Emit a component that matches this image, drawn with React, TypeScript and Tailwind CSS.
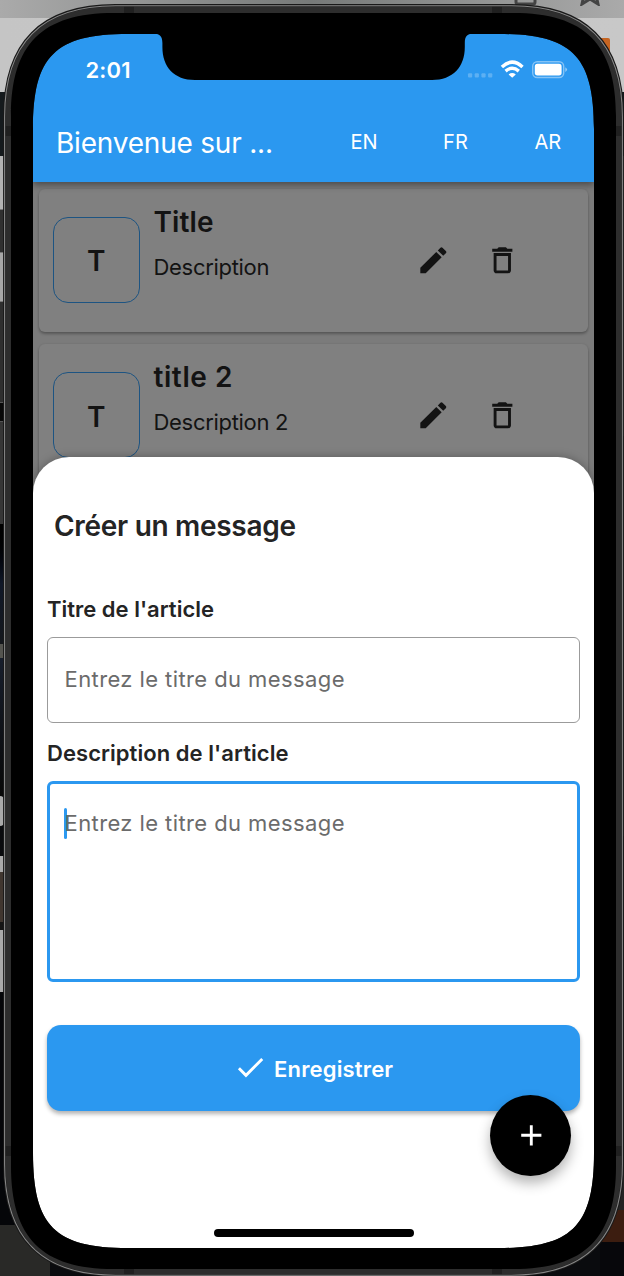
import { useLayoutEffect, useRef, useState } from "react";

type FitProps = { text: string; width: number; className?: string };

/** One line of text whose letter spacing is adjusted to fill `width`. */
function Fit({ text, width, className = "" }: FitProps) {
  const ref = useRef<HTMLSpanElement>(null);
  const [spacing, setSpacing] = useState(0);
  useLayoutEffect(() => {
    if (!ref.current) return;
    const natural = ref.current.getBoundingClientRect().width - spacing * text.length;
    setSpacing((width - natural) / Math.max(1, text.length - 1));
  }, [text, width]);
  return (
    <div className={`shrink-0 whitespace-nowrap ${className}`} style={{ width }}>
      <span ref={ref} style={{ letterSpacing: `${spacing}px` }}>{text}</span>
    </div>
  );
}

function Icon({ d }: { d: string }) {
  return (
    <svg viewBox="0 0 24 24" className="h-[34.6px] w-[34.6px] shrink-0" fill="currentColor">
      <path d={d} />
    </svg>
  );
}

const EDIT = "M3 17.25V21h3.75L17.81 9.94l-3.75-3.75L3 17.25zM20.71 7.04a.996.996 0 0 0 0-1.41l-2.34-2.34a.996.996 0 0 0-1.41 0l-1.83 1.83 3.75 3.75 1.83-1.83z";
const TRASH = "M6 19c0 1.1.9 2 2 2h8c1.1 0 2-.9 2-2V7H6v12zM8 9h8v10H8V9zm7.5-5l-1-1h-5l-1 1H5v2h14V4h-3.5z";
const CHECK = "M9 16.17L4.83 12l-1.42 1.41L9 19 21 7l-1.41-1.41z";
const PLUS = "M19 13h-6v6h-2v-6H5v-2h6V5h2v6h6v2z";

function StatusBar() {
  return (
    <div className="flex h-[72px] items-center pl-[52.5px] text-white">
      <Fit text="2:01" width={45} className="text-[22px] font-semibold" />
      <svg className="ml-[335.5px] h-6 w-[102px]" viewBox="0 0 102 24">
        <g fill="#fff" fillOpacity=".24">
          <rect x="2" y="15.3" width="4.2" height="4.2" rx="1" />
          <rect x="8.7" y="15.3" width="4.2" height="4.2" rx="1" />
          <rect x="15.4" y="15.3" width="4.2" height="4.2" rx="1" />
          <rect x="22.1" y="15.3" width="4.2" height="4.2" rx="1" />
        </g>
        <g fill="none" stroke="#fff" strokeWidth="3.4">
          <path d="M35.9 8.9Q46.2 -0.7 56.5 8.9" />
          <path d="M39.6 13.1Q46.2 7.3 52.8 13.1" />
        </g>
        <path fill="#fff" d="M46.2 19.8l-3.6-3.4q3.6-2.9 7.2 0z" />
        <rect x="66.7" y="3.7" width="31" height="15.8" rx="4.5" fill="none" stroke="#fff" strokeOpacity=".42" strokeWidth="1.4" />
        <rect x="68.8" y="5.8" width="26.8" height="11.6" rx="2.6" fill="#fff" />
        <path d="M99.3 9.2q3.6 2.4 0 4.8z" fill="#fff" fillOpacity=".5" />
      </svg>
    </div>
  );
}

function AppBar() {
  return (
    <header className="relative z-10 h-[148px] shrink-0 bg-[#2b98f0] text-white shadow-[0_3px_7px_rgba(0,0,0,0.4)]">
      <StatusBar />
      <div className="flex h-[74px] items-center pl-[23px]">
        <Fit text="Bienvenue sur ..." width={217} className="text-[28px]" />
        <Fit text="EN" width={27} className="ml-[77.5px] mt-[-2px] text-[20px]" />
        <Fit text="FR" width={25} className="ml-[65.5px] mt-[-2px] text-[20px]" />
        <Fit text="AR" width={26.5} className="ml-[66.5px] mt-[-2px] text-[20px]" />
      </div>
    </header>
  );
}

function MessageCard({ title, titleWidth, text, textWidth }: { title: string; titleWidth: number; text: string; textWidth: number }) {
  return (
    <article className="flex h-[143px] shrink-0 rounded-[6px] bg-[#808080] pl-[14px] pt-[27.5px] text-[#131313] shadow-[0_2px_3px_rgba(0,0,0,0.28),0_0_3px_rgba(0,0,0,0.08)]">
      <div className="flex h-[86.5px] w-[86.5px] shrink-0 items-center justify-center rounded-[15px] border-[1.5px] border-[#1d5482] pt-[3px] text-[28px] font-semibold">
        T
      </div>
      <div className="ml-[14px] w-[262.3px] shrink-0">
        <Fit text={title} width={titleWidth} className="mt-[-13px] text-[28px] leading-[36px] font-semibold" />
        <Fit text={text} width={textWidth} className="mt-[13px] text-[22px] leading-[29px]" />
      </div>
      <div className="flex h-[87px] w-[104px] items-center justify-between">
        <Icon d={EDIT} />
        <Icon d={TRASH} />
      </div>
    </article>
  );
}

function Sheet() {
  return (
    <section className="relative z-20 mt-[-40px] flex h-[791px] shrink-0 flex-col rounded-t-[36px] bg-white px-[14px] pt-[49px] text-[#242424] shadow-[0_-1px_8px_rgba(0,0,0,0.25)]">
      <Fit text="Créer un message" width={242} className="ml-[7px] text-[28px] leading-[40px] font-semibold" />
      <Fit text="Titre de l'article" width={167} className="mt-[48px] text-[22px] leading-[30px] font-semibold" />
      <div className="mr-[.5px] mt-[13px] flex h-[86px] items-center rounded-[6px] border-[1.5px] border-[#9b9b9b] pl-[16.5px]">
        <Fit text="Entrez le titre du message" width={280} className="mt-[-2px] text-[22px] text-[#6b6b6b]" />
      </div>
      <Fit text="Description de l'article" width={241.5} className="mt-[14.5px] text-[22px] leading-[30px] font-semibold" />
      <div className="mr-[.5px] mt-[13px] flex h-[201px] items-start rounded-[6px] border-[3px] border-[#2b98f0] pl-[14px] pt-[24px]">
        <div className="h-[31px] w-[3px] shrink-0 rounded bg-[#2b98f0]" />
        <Fit text="Entrez le titre du message" width={280} className="ml-[-2.5px] text-[22px] leading-[31px] text-[#6b6b6b]" />
      </div>
      <button className="mr-[.5px] mt-[43px] flex h-[86.5px] shrink-0 items-center rounded-[14px] bg-[#2b98f0] pl-[186px] text-white shadow-[0_3px_4px_rgba(0,0,0,0.3)]">
        <Icon d={CHECK} />
        <Fit text="Enregistrer" width={119} className="ml-[6.5px] mt-[3px] text-left text-[22px] font-semibold" />
      </button>
      <button className="absolute left-[457.3px] top-[638px] flex h-[81px] w-[81px] items-center justify-center rounded-full bg-black text-white shadow-[0_7px_13px_rgba(0,0,0,0.3)]">
        <Icon d={PLUS} />
      </button>
      <div className="absolute left-[180.5px] top-[772px] h-[7.5px] w-[200px] rounded-full bg-black" />
    </section>
  );
}

/** Closed outline with smooth, continuous corners. */
function outline(l: number, t: number, r: number, b: number, c: number, k: number) {
  return `M${l} ${t + c}C${l} ${t + k} ${l + k} ${t} ${l + c} ${t}H${r - c}C${r - k} ${t} ${r} ${t + k} ${r} ${t + c}V${b - c}C${r} ${b - k} ${r - k} ${b} ${r - c} ${b}H${l + c}C${l + k} ${b} ${l} ${b - k} ${l} ${b - c}Z`;
}

const SCREEN = outline(33, 34, 594, 1248, 95, 22);
const BEZEL = outline(11, 13, 616, 1269, 103, 31);
const BODY = outline(4.3, 5.3, 622.7, 1275.5, 111, 37);

function PhoneFrame() {
  return (
    <svg className="pointer-events-none absolute inset-0 z-30 h-[1276px] w-[624px]" viewBox="0 0 624 1276" fillRule="evenodd">
      <path d={BODY + SCREEN} fill="#2d2d2d" />
      <path d="M124 6h10v8h-10zM492 6h10v8h-10zM124 1269h10v7h-10zM492 1269h10v7h-10zM5 126h7v10H5zM616 126h6v10h-6zM5 1146h7v10H5zM616 1146h6v10h-6z" fill="#202020" />
      <path d={BODY} fill="none" stroke="#191919" strokeWidth="2.4" />
      <path d={outline(4.6, 5.8, 622.4, 1275.2, 111, 37)} fill="none" stroke="#868686" strokeWidth="1.1" />
      <path d={BEZEL + SCREEN} fill="#000" />
      <path d="M154 33.5C160 34 162.4 36.5 162.4 43V47C162.4 67 174 80 195 80H432C453 80 464.8 67 464.8 47V43C464.8 36.5 467 34 473 33.5Z" fill="#000" />
    </svg>
  );
}

function Desktop() {
  return (
    <div className="absolute inset-0 flex flex-col bg-[#0a0b0e]">
      <div className="relative h-[18px] shrink-0 overflow-hidden bg-gradient-to-r from-[#aaa] via-[#777a79] to-[#aaa]">
        <svg className="absolute left-[514px] top-[-14px] h-[20px] w-[90px]" viewBox="0 0 90 20" fill="none" stroke="#444" strokeWidth="3">
          <rect x="2" y="3" width="19" height="15" rx="2" />
          <path d="M68 18l2-9-6-6h8l4-6 4 6h8l-6 6 2 9-8-5z" />
        </svg>
      </div>
      <div className="flex h-[74px] shrink-0 items-start justify-end bg-gradient-to-r from-[#c5c5c5] to-[#c8c8c8] pr-[14px] pt-[20px]">
        <div className="h-[15px] w-[14px] rounded-[2px] bg-[#c66522]" />
      </div>
      <div className="flex min-h-0 flex-1 justify-between">
        <div className="flex w-[50px] flex-col">
          <div className="h-[64px] bg-[#151a1d]" />
          <div className="h-[53px] bg-[#b3b3b3]" />
          <div className="h-[44px] border-y border-[#777] bg-[#303030]" />
          <div className="h-[48px] bg-[#a8a8a8]" />
          <div className="h-[101px] border-t border-[#777] bg-[#2e2e2e]" />
          <div className="h-[20px] border-y border-[#555] bg-[#080808]" />
          <div className="h-[102px] bg-[#363636]" />
          <div className="h-[120px] bg-gradient-to-b from-black via-[#101828] to-[#14171c]" />
          <div className="h-[14px] bg-[#54544f]" />
          <div className="h-[138px] bg-gradient-to-b from-[#171e2c] to-[#080808]" />
          <div className="h-[30px] w-[4px] rounded-r-full bg-[#aaa]" />
          <div className="h-[30px]" />
          <div className="h-[16px] rounded-tr-[4px] bg-[#aaa]" />
          <div className="h-[50px] bg-[#40362f]" />
          <div className="h-[8px] bg-[#151515]" />
          <div className="h-[62px] bg-[#aaa]" />
          <div className="h-[233px] bg-[#050609]" />
          <div className="flex-1 bg-[#292927]" />
        </div>
        <div className="flex w-[24px] flex-col">
          <div className="h-[64px] bg-[#151a1d]" />
          <div className="h-[280px] bg-[#777]" />
          <div className="h-[400px] bg-[#494949]" />
          <div className="h-[374px] bg-[#242424]" />
          <div className="h-[32px] bg-[#3c1d10]" />
          <div className="flex-1 bg-[#07070b]" />
        </div>
      </div>
    </div>
  );
}

export default function App() {
  return (
    <div className="relative h-[1276px] w-[624px] overflow-hidden font-['Inter',sans-serif]">
      <Desktop />
      <div className="relative flex h-[1276px] flex-col pt-[34px] pl-[33px]">
        <div className="flex h-[1214px] w-[561px] flex-col overflow-hidden rounded-[60px] bg-[#7b7b7b]">
          <AppBar />
          <main className="flex h-[315px] shrink-0 flex-col gap-[12.4px] overflow-hidden px-[6px] pt-[7px]">
            <MessageCard title="Title" titleWidth={60} text="Description" textWidth={116} />
            <MessageCard title="title 2" titleWidth={79} text="Description 2" textWidth={135} />
          </main>
          <Sheet />
        </div>
      </div>
      <PhoneFrame />
    </div>
  );
}
